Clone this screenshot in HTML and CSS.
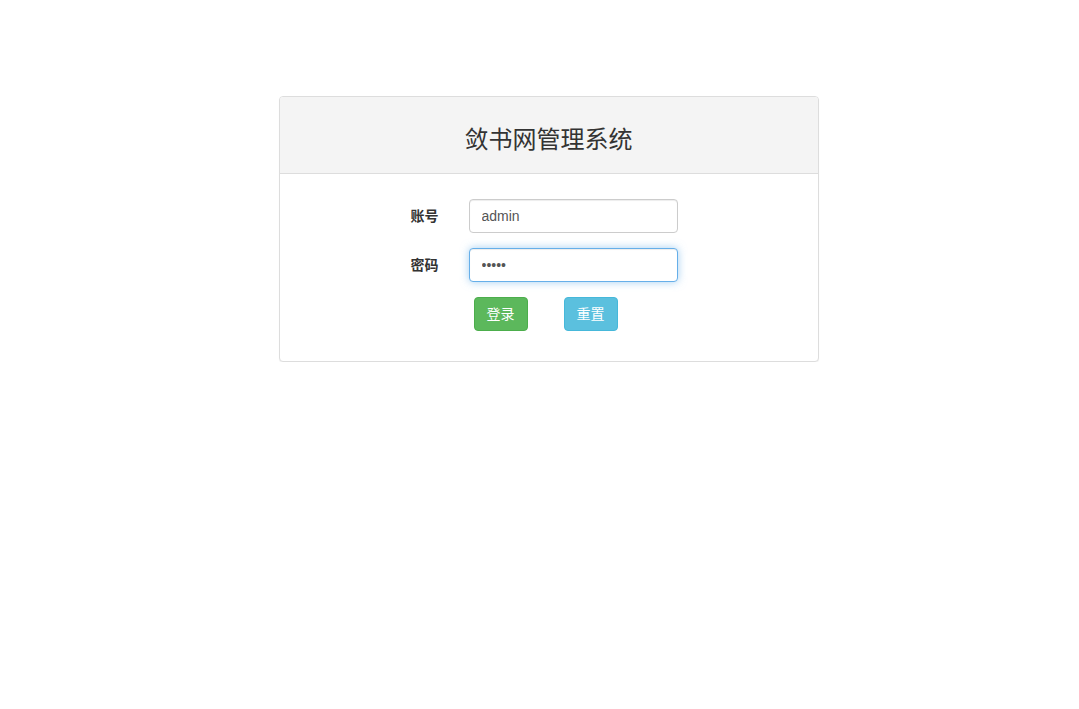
FILE: index.html
```html
<!DOCTYPE html>
<html lang="zh-CN">
<head>
<meta charset="utf-8">
<title>敛书网管理系统</title>
<link rel="stylesheet" href="styles.css">
</head>
<body>
<div class="page">
  <div class="panel">
    <div class="panel-heading">
      <h3 class="panel-title">敛书网管理系统</h3>
    </div>
    <div class="panel-body">
      <form class="form">
        <div class="form-row">
          <label class="form-label" for="user">账号</label>
          <input class="form-input" id="user" type="text" value="admin">
        </div>
        <div class="form-row">
          <label class="form-label" for="pwd">密码</label>
          <input class="form-input focused" id="pwd" type="password" value="12345">
        </div>
        <div class="form-row">
          <span></span>
          <div class="btn-row">
            <button type="button" class="btn btn-success">登录</button>
            <button type="button" class="btn btn-info">重置</button>
          </div>
        </div>
      </form>
    </div>
  </div>
</div>
</body>
</html>
```

FILE: styles.css
```css
* { box-sizing: border-box; }

html, body {
  margin: 0;
  padding: 0;
  background: #fff;
}

body {
  font-family: "Liberation Sans", Arial, "Noto Sans CJK SC", sans-serif;
  font-size: 14px;
  line-height: 20px;
  color: #333;
}

.page {
  display: flex;
  justify-content: center;
  padding-top: 96px;
  padding-left: 18px;
}

.panel {
  width: 540px;
  border: 1px solid #ddd;
  border-radius: 4px;
  background: #fff;
  box-shadow: 0 1px 1px rgba(0, 0, 0, 0.05);
}

.panel-heading {
  background: #f4f4f4;
  border-bottom: 1px solid #ddd;
  border-radius: 3px 3px 0 0;
  padding: 10px 15px;
}

.panel-title {
  margin: 18px 0 12px;
  font-family: "Noto Sans CJK SC", sans-serif;
  font-size: 24px;
  font-weight: 400;
  line-height: 26.4px;
  text-align: center;
  color: #333;
}

.panel-body {
  padding: 25px 15px 15px;
}

.form {
  margin: 0;
}

.form-row {
  display: grid;
  grid-template-columns: 144px 209px;
  column-gap: 30px;
  margin-bottom: 15px;
}

.form-label {
  padding-top: 6px;
  text-align: right;
  font-family: "Noto Sans CJK SC", sans-serif;
  font-weight: 700;
  font-size: 14px;
  line-height: 20px;
  color: #333;
}

.form-input {
  height: 34px;
  width: 209px;
  padding: 6px 12px;
  font-family: "Liberation Sans", Arial, sans-serif;
  font-size: 14px;
  line-height: 20px;
  color: #555;
  background: #fff;
  border: 1px solid #ccc;
  border-radius: 4px;
  box-shadow: inset 0 1px 1px rgba(0, 0, 0, 0.075);
  outline: none;
}

.form-input.focused {
  border-color: #66afe9;
  box-shadow: inset 0 1px 1px rgba(0, 0, 0, 0.075), 0 0 8px rgba(102, 175, 233, 0.6);
}

.btn-row {
  display: flex;
  gap: 36px;
  padding-left: 5px;
}

.btn {
  height: 34px;
  padding: 5px 12px 7px;
  font-family: "Noto Sans CJK SC", sans-serif;
  font-size: 14px;
  line-height: 20px;
  color: #fff;
  border: 1px solid transparent;
  border-radius: 4px;
  cursor: pointer;
}

.btn-success {
  background: #5cb85c;
  border-color: #4cae4c;
}

.btn-info {
  background: #5bc0de;
  border-color: #46b8da;
}
```
